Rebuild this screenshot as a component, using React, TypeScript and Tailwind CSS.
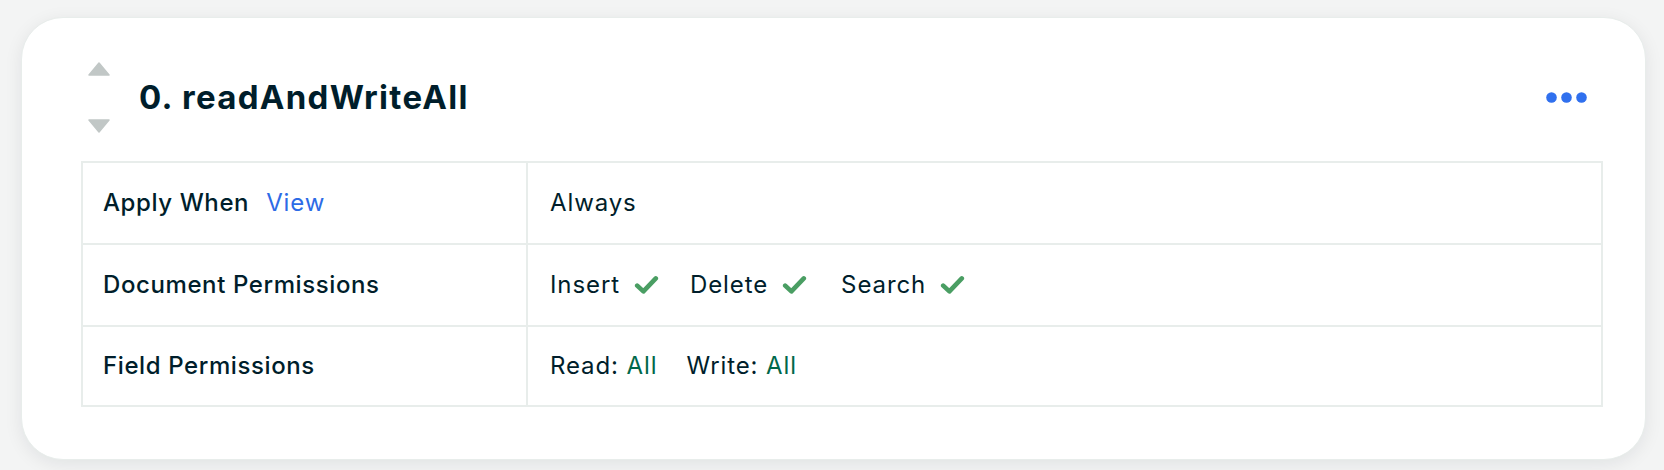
import React from 'react';

const rows = [
  { label: 'Apply When', link: 'View', h: 'h-[80px]' },
  { label: 'Document Permissions', h: 'h-[82px]' },
  { label: 'Field Permissions', h: 'h-[80px]' },
];

const Dots = () => (
  <svg width="41" height="11" viewBox="0 0 41 11" className="text-[#3070ee]">
    <circle cx="5.5" cy="5.5" r="5.3" fill="currentColor" />
    <circle cx="20.5" cy="5.5" r="5.3" fill="currentColor" />
    <circle cx="35.5" cy="5.5" r="5.3" fill="currentColor" />
  </svg>
);

// heavy check mark, like the reference glyph
const Check = () => (
  <svg width="25" height="20" viewBox="0 0 25 20" className="text-[#4a9e63]">
    <path
      d="M3.2 10.6 L9.4 16.4 L21.8 3.4"
      fill="none"
      stroke="currentColor"
      strokeWidth="4.6"
      strokeLinejoin="round"
      strokeLinecap="round"
    />
  </svg>
);

const App = () => {
  return (
    <div
      className="h-[470px] bg-[#f3f4f4] pl-[21px] pr-[18px] pt-[17px]"
      style={{ fontFamily: 'Inter, "Liberation Sans", sans-serif' }}
    >
      <div className="h-[443px] rounded-[42px] border border-[#e8edeb] bg-white pl-[59px] pr-[42px] pt-[44px] shadow-[0_4px_18px_rgba(0,30,43,0.08)]">
        <div className="flex h-[71px] items-center pl-[7px] pr-[16px]">
          <div className="flex h-[71px] w-[22px] flex-col justify-between text-[#c1c7c6]">
            <svg width="22" height="14" viewBox="0 0 22 14">
              <path d="M11 1 L21 13 L1 13 Z" fill="currentColor" stroke="currentColor" strokeLinejoin="round" strokeWidth="1.5" />
            </svg>
            <svg width="22" height="14" viewBox="0 0 22 14">
              <path d="M1 1 L21 1 L11 13 Z" fill="currentColor" stroke="currentColor" strokeLinejoin="round" strokeWidth="1.5" />
            </svg>
          </div>
          <h2 className="ml-[29px] text-[33px] font-bold tracking-[1.3px] text-[#001e2b]">0. readAndWriteAll</h2>
          <div className="ml-auto">
            <Dots />
          </div>
        </div>

        <div className="mt-[28px] border-2 border-[#e8edeb] text-[24px] tracking-[0.6px] text-[#001e2b]">
          {rows.map((row, i) => (
            <div
              key={row.label}
              className={`grid ${row.h} grid-cols-[445px_1fr] ${i > 0 ? 'border-t-2 border-[#e8edeb]' : ''}`}
            >
              <div className="flex items-center border-r-2 border-[#e8edeb] pl-[20px] font-medium">
                {row.label}
                {row.link && <span className="ml-[17px] font-normal tracking-[0.9px] text-[#2d6be6]">{row.link}</span>}
              </div>
              <div className="flex items-center pl-[22px] tracking-[0.9px]">
                {i === 0 && <span>Always</span>}
                {i === 1 && (
                  <div className="flex items-center">
                    <span>Insert</span>
                    <span className="ml-[14px]"><Check /></span>
                    <span className="ml-[31px]">Delete</span>
                    <span className="ml-[14px]"><Check /></span>
                    <span className="ml-[34px]">Search</span>
                    <span className="ml-[14px]"><Check /></span>
                  </div>
                )}
                {i === 2 && (
                  <div className="flex items-center">
                    <span>Read: <span className="text-[#00684a]">All</span></span>
                    <span className="ml-[29px]">Write: <span className="text-[#00684a]">All</span></span>
                  </div>
                )}
              </div>
            </div>
          ))}
        </div>
      </div>
    </div>
  );
};

export default App;
